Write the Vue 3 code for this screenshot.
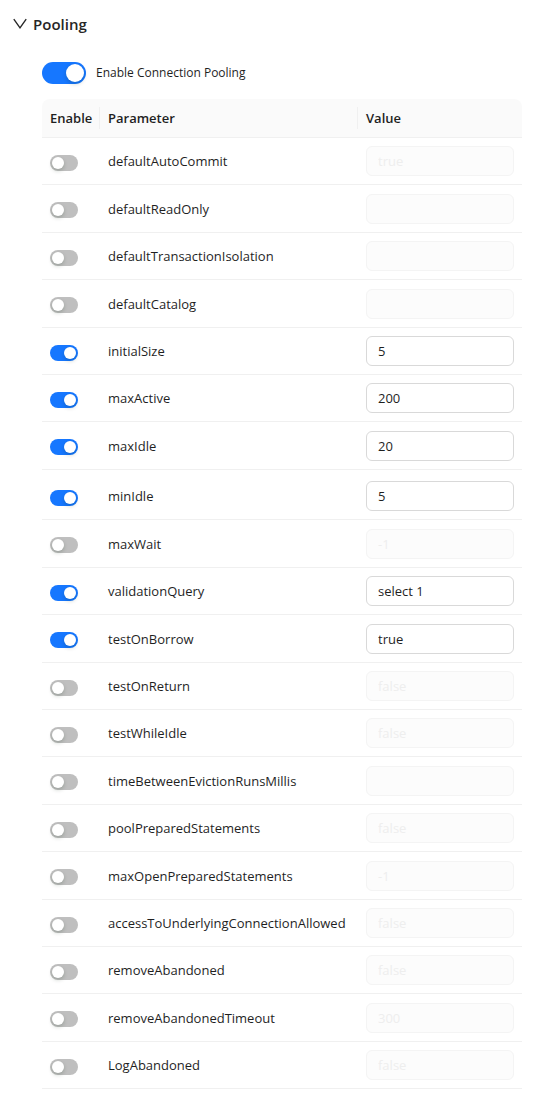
<script setup>
import { ref, reactive } from 'vue'

const open = ref(true)
const pooling = ref(true)

const row = (name, enabled, value) => ({ name, enabled, value })

const groups = reactive([
  [
    row('defaultAutoCommit', false, 'true'),
    row('defaultReadOnly', false, ''),
    row('defaultTransactionIsolation', false, ''),
    row('defaultCatalog', false, ''),
    row('initialSize', true, '5'),
    row('maxActive', true, '200'),
    row('maxIdle', true, '20'),
  ],
  [
    row('minIdle', true, '5'),
    row('maxWait', false, '-1'),
    row('validationQuery', true, 'select 1'),
    row('testOnBorrow', true, 'true'),
    row('testOnReturn', false, 'false'),
    row('testWhileIdle', false, 'false'),
    row('timeBetweenEvictionRunsMillis', false, ''),
    row('poolPreparedStatements', false, 'false'),
    row('maxOpenPreparedStatements', false, '-1'),
    row('accessToUnderlyingConnectionAllowed', false, 'false'),
    row('removeAbandoned', false, 'false'),
    row('removeAbandonedTimeout', false, '300'),
    row('LogAbandoned', false, 'false'),
  ],
])
</script>

<template>
  <section class="panel">
    <button class="heading" type="button" :aria-expanded="open" @click="open = !open">
      <svg class="chevron" :class="{ closed: !open }" viewBox="0 0 14 12" aria-hidden="true">
        <path d="M0.8 1.2 L7 9.8 L13.2 1.2" />
      </svg>
      <span>Pooling</span>
    </button>
    <div v-if="open" class="content">
      <div class="master">
        <input id="pooling" v-model="pooling" class="switch large" type="checkbox" role="switch" />
        <label for="pooling">Enable Connection Pooling</label>
      </div>
      <table>
        <colgroup>
          <col class="col-enable" />
          <col />
          <col class="col-value" />
        </colgroup>
        <thead>
          <tr>
            <th scope="col"><div>Enable</div></th>
            <th scope="col"><div>Parameter</div></th>
            <th scope="col"><div>Value</div></th>
          </tr>
        </thead>
        <tbody v-for="(rows, g) in groups" :key="g">
          <tr v-for="item in rows" :key="item.name">
            <td>
              <input :id="item.name" v-model="item.enabled" class="switch" type="checkbox" role="switch" />
            </td>
            <td><label :for="item.name">{{ item.name }}</label></td>
            <td>
              <input v-model="item.value" class="field" type="text" :aria-label="item.name + ' value'" :disabled="!item.enabled" />
            </td>
          </tr>
        </tbody>
      </table>
    </div>
  </section>
</template>

<style>
body {
  background: #fff;
}
</style>

<style scoped>
.panel {
  padding: 12px 12px 14px;
  font-family: "Open Sans", "Noto Sans", sans-serif;
  font-size: 13px;
  line-height: 22px;
  color: #1f1f1f;
}

.heading {
  display: flex;
  align-items: center;
  gap: 6px;
  height: 24px;
  padding: 0 1px;
  border: 0;
  background: none;
  color: #262626;
  font: 600 15px/24px "Open Sans", "Noto Sans", sans-serif;
  cursor: pointer;
}

.chevron {
  width: 14px;
  height: 12px;
  fill: none;
  stroke: #262626;
  stroke-width: 1.4;
}

.chevron.closed {
  transform: rotate(-90deg);
}

.content {
  padding: 26px 0 0 30px;
}

.master {
  display: flex;
  align-items: center;
  gap: 10px;
  margin-bottom: 15px;
  font-size: 12px;
}

.switch {
  appearance: none;
  display: block;
  flex: none;
  box-sizing: border-box;
  width: 28px;
  height: 16px;
  margin: 0;
  padding: 2px;
  border-radius: 8px;
  background: #bfbfbf;
  cursor: pointer;
}

.switch::before {
  content: "";
  display: block;
  width: 12px;
  height: 12px;
  border-radius: 50%;
  background: #fff;
  box-shadow: 0 2px 4px rgba(0, 35, 11, 0.2);
}

.switch:checked {
  background: #1677ff;
}

.switch:checked::before {
  margin-left: auto;
}

.switch.large {
  width: 44px;
  height: 22px;
  border-radius: 11px;
}

.switch.large::before {
  width: 18px;
  height: 18px;
}

table {
  width: 100%;
  table-layout: fixed;
  border-collapse: separate;
  border-spacing: 0;
}

.col-enable {
  width: 58px;
}

.col-value {
  width: 164px;
}

th {
  padding: 8px 0;
  border-bottom: 1px solid #f0f0f0;
  background: #fafafa;
  text-align: left;
  font-weight: 600;
}

th div {
  padding: 0 8px;
  border-right: 1px solid #f0f0f0;
}

th:first-child {
  border-top-left-radius: 8px;
}

th:last-child {
  border-top-right-radius: 8px;
}

th:last-child div {
  border-right: 0;
}

td {
  box-sizing: border-box;
  height: 47px;
  padding: 0 8px;
  border-bottom: 1px solid #f0f0f0;
  vertical-align: middle;
}

td:first-child {
  padding-top: 3px;
}

tr:nth-child(5n + 2) td,
tr:nth-child(5n + 4) td {
  height: 48px;
}

tbody + tbody tr:first-child td {
  height: 50px;
  padding-top: 3px;
}

tbody + tbody tr:first-child td:first-child {
  padding-top: 6px;
}

.field {
  display: block;
  box-sizing: border-box;
  width: 100%;
  height: 30px;
  padding: 0 11px;
  border: 1px solid #d9d9d9;
  border-radius: 6px;
  background: #fff;
  color: #1f1f1f;
  font: 13px/22px "Open Sans", "Noto Sans", sans-serif;
}

.field:disabled {
  border-color: #f4f4f4;
  background: #fcfcfc;
  color: #eeeeee;
}
</style>
